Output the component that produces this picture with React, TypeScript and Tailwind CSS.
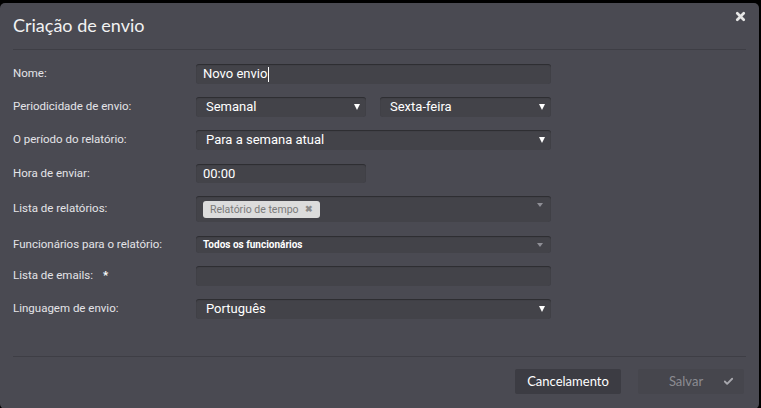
import { X, Check } from "lucide-react";

const label = "text-[11.5px] text-[#e4e4e8]";
const field =
  "flex items-center rounded-[3px] bg-[#434349] shadow-[inset_0_1px_1px_rgba(0,0,0,0.35)] text-white";

function Arrow({ dim = false }: { dim?: boolean }) {
  return dim ? (
    <span className="ml-auto mr-[8px] h-0 w-0 border-x-[3.5px] border-t-[4px] border-x-transparent border-t-[#8e8e95]" />
  ) : (
    <span className="ml-auto mr-[6px] h-0 w-0 border-x-[3px] border-t-[6px] border-x-transparent border-t-white" />
  );
}

function Row({ name, children, h = 20, star = false, mt = 0 }: { name: string; children: React.ReactNode; h?: number; star?: boolean; mt?: number }) {
  return (
    <div className="flex items-center" style={{ height: h, marginTop: mt }}>
      <div className={`w-[196px] shrink-0 pl-[13px] ${label}`}>
        {name}
        {star && <span className="ml-[10px] font-bold text-white">*</span>}
      </div>
      {children}
    </div>
  );
}

export default function App() {
  return (
    <div className="h-[408px] w-[761px] overflow-hidden bg-black pt-[3px]" style={{ fontFamily: "Roboto, 'Liberation Sans', sans-serif" }}>
      <div className="flex h-[406px] w-[759px] flex-col rounded-[5px] bg-[#4a4a52]">
        {/* header */}
        <div className="relative mx-[13px] flex h-[47px] items-center border-b border-[#3e3e45] pb-[2px]">
          <h1 className="text-[18px] text-[#f2f2f2]" style={{ fontFamily: "Lato, sans-serif" }}>
            Criação de envio
          </h1>
          <X className="absolute right-[-1px] top-[7px] h-[13px] w-[13px] text-[#e6e6e6]" strokeWidth={5} />
        </div>

        {/* form */}
        <div className="flex flex-col gap-[13px] pt-[14px]">
          <Row name="Nome:">
            <div className={`${field} h-[20px] w-[355px] pl-[7px] text-[13px]`}>
              Novo envio<span className="ml-[1px] h-[15px] w-px bg-white" />
            </div>
          </Row>
          <Row name="Periodicidade de envio:">
            <div className={`${field} h-[20px] w-[170px] pl-[10px] text-[13px]`}>
              Semanal
              <Arrow />
            </div>
            <div className={`${field} ml-[14px] h-[20px] w-[171px] pl-[10px] text-[13px]`}>
              Sexta-feira
              <Arrow />
            </div>
          </Row>
          <Row name="O período do relatório:">
            <div className={`${field} h-[20px] w-[355px] pl-[10px] text-[13px]`}>
              Para a semana atual
              <Arrow />
            </div>
          </Row>
          <Row name="Hora de enviar:" h={19} mt={1}>
            <div className={`${field} h-[19px] w-[170px] pl-[7px] text-[13px]`}>00:00</div>
          </Row>
          <Row name="Lista de relatórios:" h={26}>
            <div className={`${field} h-[26px] w-[355px] items-start pl-[7px] pt-[5px]`}>
              <span className="flex h-[17px] items-center gap-[6px] rounded-[3px] bg-[#dcdcdc] px-[7px] text-[10.5px] text-[#7a7a7a]">
                Relatório de tempo
                <span className="text-[9px] font-bold text-[#8a8a8a]">✖</span>
              </span>
              <span className="mt-[2px] ml-auto mr-[8px] h-0 w-0 border-x-[3.5px] border-t-[4px] border-x-transparent border-t-[#8e8e95]" />
            </div>
          </Row>
          <Row name="Funcionários para o relatório:" h={17} mt={1}>
            <div className={`${field} h-[17px] w-[355px] pl-[7px] text-[10px] font-bold`}>
              Todos os funcionários
              <Arrow dim />
            </div>
          </Row>
          <Row name="Lista de emails:" star>
            <div className={`${field} h-[20px] w-[355px]`} />
          </Row>
          <Row name="Linguagem de envio:">
            <div className={`${field} h-[20px] w-[355px] pl-[10px] text-[13px]`}>
              Português
              <Arrow />
            </div>
          </Row>
        </div>

        {/* footer */}
        <div className="mx-[13px] mt-[37px] flex justify-end gap-[17px] border-t border-[#3e3e45] pr-[2px] pt-[12px]" style={{ fontFamily: "Lato, sans-serif" }}>
          <button className="h-[25px] w-[106px] rounded-[2px] bg-[#3c3c43] text-[13px] text-white">Cancelamento</button>
          <button className="relative h-[25px] w-[106px] rounded-[2px] bg-[#46464d] text-[13px] text-[#8c8c92]">
            <span className="mr-[10px]">Salvar</span>
            <Check className="absolute right-[10px] top-[7px] h-[11px] w-[11px] text-[#a8a8ae]" strokeWidth={4} />
          </button>
        </div>
      </div>
    </div>
  );
}
